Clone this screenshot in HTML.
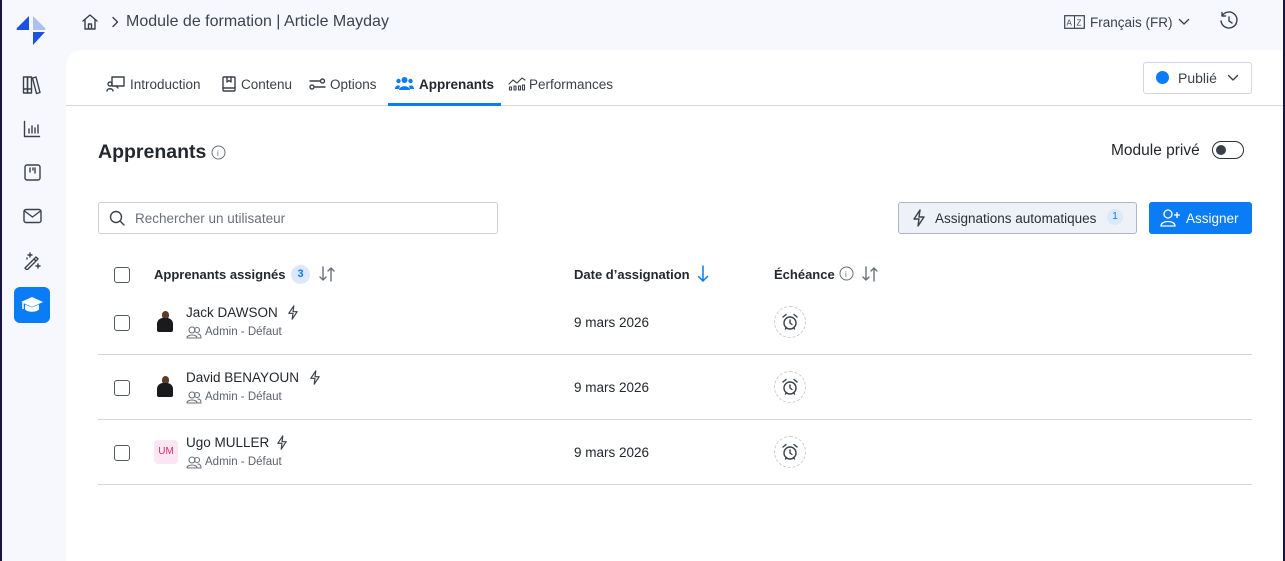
<!DOCTYPE html>
<html><head><meta charset="utf-8"><style>
*{box-sizing:border-box;margin:0;padding:0}
body{width:1285px;height:561px;overflow:hidden;background:#f7f8fd;font-family:"Liberation Sans",sans-serif;color:#2b2f36;position:relative}
.a{position:absolute}
svg{display:block}
.ic{stroke:#3b4049;fill:none;stroke-width:1.4;stroke-linecap:round;stroke-linejoin:round}
.t{font-size:13.5px;color:#3b4049;white-space:nowrap}
.h{font-size:13px;font-weight:bold;color:#23272e;white-space:nowrap}
.cb{width:16px;height:16px;border:1.5px solid #555b64;border-radius:3px;background:#fff}
.hr{height:1px;background:#d3d6dc;left:98px;width:1154px}
</style></head><body>
<div class="a" style="left:0;top:0;width:2px;height:561px;background:#1a1347"></div>
<div class="a" style="right:0;top:0;width:2px;height:561px;background:#1a1347"></div>
<!-- logo -->
<svg class="a" style="left:15px;top:14px" width="32" height="32" viewBox="0 0 32 32">
<path d="M14 2 L14 16 L2 16 Q1 15 2 14 Z" fill="#1d52e0"/><path d="M18 2 L30 14 Q31 15 30 16 L18 16 Z" fill="#a9c1f5"/><path d="M18 18 L30 18 L18 31 Z" fill="#1d52e0"/></svg>
<!-- sidebar icons -->
<svg class="a ic" style="left:22px;top:75px" width="20" height="20" viewBox="0 0 20 20"><rect x="1.5" y="2" width="4" height="16"/><rect x="5.5" y="2" width="4" height="16"/><path d="M10.5 3 l3.5-1 4 15.5-3.5 1z"/><path d="M1.5 14h8"/></svg>
<svg class="a ic" style="left:23px;top:120px" width="18" height="18" viewBox="0 0 18 18"><path d="M1.5 1.5v15h15M6 13V9M9 13V6M12 13V8M15 13V5"/></svg>
<svg class="a ic" style="left:24px;top:164px" width="17" height="17" viewBox="0 0 17 17"><rect x="1" y="1" width="15" height="15" rx="2"/><path d="M6 4v4M9 4v2M11 4v5"/></svg>
<svg class="a ic" style="left:23px;top:208px" width="19" height="16" viewBox="0 0 19 16"><rect x="1" y="1.5" width="17" height="13" rx="2"/><path d="M1.5 3l8 6 8-6"/></svg>
<svg class="a ic" style="left:23px;top:251px" width="19" height="19" viewBox="0 0 19 19"><path d="M2 17L13 6l2 2L4 19zM11 8l2 2M7 2v4M5 4h4M15 13v4M13 15h4M4 7v1"/></svg>
<div class="a" style="left:14px;top:287px;width:36px;height:36px;border-radius:6px;background:#0a7cf5"></div>
<svg class="a" style="left:20px;top:295px" width="24" height="20" viewBox="0 0 24 20"><path d="M12 2L1 7l11 5 11-5z" fill="#fff"/><path d="M5 9.5v5c3 3 11 3 14 0v-5l-7 3z" fill="#fff"/><path d="M3 8v6" stroke="#fff" stroke-width="1.5"/></svg>
<!-- breadcrumb -->
<svg class="a ic" style="left:81px;top:13px" width="18" height="18" viewBox="0 0 18 18"><path d="M2 8L9 2l7 6M4 6.5V16h10V6.5M7.5 16v-5h3v5"/></svg>
<svg class="a ic" style="left:110px;top:16px" width="10" height="12" viewBox="0 0 10 12"><path d="M3 1.5l4.5 4.5L3 10.5"/></svg>
<div class="a" style="left:126px;top:13px;font-size:16px;color:#3d4350">Module de formation | Article Mayday</div>
<!-- lang -->
<svg class="a" style="left:1064px;top:15px" width="21" height="14" viewBox="0 0 21 14"><rect x=".7" y=".7" width="19.6" height="12.6" fill="none" stroke="#3b4049" stroke-width="1.2"/><path d="M10.5 1v12" stroke="#3b4049"/><text x="2.5" y="10.5" font-size="8" font-family="Liberation Sans" fill="#3b4049">A</text><text x="12.5" y="10.5" font-size="8" font-family="Liberation Sans" fill="#3b4049">Z</text></svg>
<div class="a t" style="left:1090px;top:15px;font-size:13.5px">Français (FR)</div>
<svg class="a ic" style="left:1178px;top:18px" width="12" height="8" viewBox="0 0 12 8"><path d="M1.5 1.5l4.5 4.5 4.5-4.5"/></svg>
<svg class="a ic" style="left:1219px;top:11px" width="20" height="20" viewBox="0 0 20 20"><path d="M3 5a8 8 0 1 1-1 5M3 1.5V5h3.5M10 6v4l3 2"/></svg>
<!-- panel -->
<div class="a" style="left:66px;top:50px;width:1217px;height:511px;background:#fff;border-top-left-radius:16px"></div>
<!-- tabs -->
<div class="a" style="left:66px;top:105px;width:1217px;height:1px;background:#d7dae0"></div>
<div class="a" style="left:388px;top:103px;width:113px;height:3px;background:#0a7cf5"></div>
<svg class="a ic" style="left:106px;top:76px" width="19" height="16" viewBox="0 0 19 16"><rect x="6" y="1" width="12" height="9"/><circle cx="4" cy="8" r="2"/><path d="M1 15c0-3 6-3 6 0M10 10l2 2"/></svg>
<div class="a t" style="left:130px;top:77px">Introduction</div>
<svg class="a ic" style="left:222px;top:76px" width="14" height="16" viewBox="0 0 14 16"><rect x="1" y="1" width="12" height="14" rx="1"/><path d="M1 12h12M5 1v5l2-1.5L9 6V1"/></svg>
<div class="a t" style="left:241px;top:77px">Contenu</div>
<svg class="a ic" style="left:309px;top:78px" width="17" height="12" viewBox="0 0 17 12"><path d="M1 3h10M6 9h10"/><circle cx="13.5" cy="3" r="2"/><circle cx="3" cy="9" r="2"/></svg>
<div class="a t" style="left:330px;top:77px">Options</div>
<svg class="a" style="left:395px;top:76px" width="19" height="15" viewBox="0 0 19 15" fill="#0a7cf5"><circle cx="9.5" cy="4" r="3"/><circle cx="3.5" cy="5" r="2.2"/><circle cx="15.5" cy="5" r="2.2"/><path d="M4 14c0-5 11-5 11 0z"/><path d="M0 13c0-4 4-4 5-3l-1 3zM19 13c0-4-4-4-5-3l1 3z"/></svg>
<div class="a t" style="left:419px;top:77px;font-weight:bold;color:#23272e">Apprenants</div>
<svg class="a ic" style="left:508px;top:77px;stroke-width:1.1" width="18" height="14" viewBox="0 0 18 14"><path d="M1 7l4-4 4 3 5-5 3 2"/><rect x="1.5" y="10" width="2" height="3"/><rect x="6" y="9" width="2" height="4"/><rect x="10.5" y="9" width="2" height="4"/><rect x="14.5" y="8" width="2" height="5"/></svg>
<div class="a t" style="left:529px;top:77px">Performances</div>
<!-- publié -->
<div class="a" style="left:1143px;top:62px;width:109px;height:32px;border:1px solid #d3d6dc;border-radius:3px;background:#fff"></div>
<div class="a" style="left:1156px;top:71px;width:13px;height:13px;border-radius:50%;background:#0a7cf5"></div>
<div class="a t" style="left:1178px;top:70px;font-size:14px">Publié</div>
<svg class="a ic" style="left:1227px;top:74px" width="12" height="8" viewBox="0 0 12 8"><path d="M1.5 1.5l4.5 4.5 4.5-4.5"/></svg>
<!-- title -->
<div class="a" style="left:98px;top:141px;font-size:19.5px;font-weight:bold;color:#23272e">Apprenants</div>
<svg class="a" style="left:211px;top:145px" width="15" height="15" viewBox="0 0 15 15"><circle cx="7.5" cy="7.5" r="6.5" fill="none" stroke="#6b7079"/><text x="6" y="11" font-size="8" font-family="Liberation Sans" fill="#6b7079">i</text></svg>
<div class="a t" style="left:1111px;top:142px;font-size:15.5px;color:#23272e">Module privé</div>
<div class="a" style="left:1212px;top:141px;width:32px;height:18px;border:1.5px solid #2b2f36;border-radius:9px"></div>
<div class="a" style="left:1216px;top:145px;width:10px;height:10px;border-radius:50%;background:#3b414b"></div>
<!-- search -->
<div class="a" style="left:98px;top:202px;width:400px;height:32px;border:1px solid #ccd0d7;border-radius:3px"></div>
<svg class="a ic" style="left:109px;top:210px" width="16" height="16" viewBox="0 0 16 16"><circle cx="7" cy="7" r="5.5"/><path d="M11 11l4 4"/></svg>
<div class="a t" style="left:135px;top:211px;color:#6b7079">Rechercher un utilisateur</div>
<!-- buttons -->
<div class="a" style="left:898px;top:202px;width:239px;height:32px;border:1px solid #b0b6c2;border-radius:3px;background:#eef1f8"></div>
<svg class="a ic" style="left:912px;top:209px" width="14" height="18" viewBox="0 0 14 18"><path d="M8 1L2 10h5l-1 7 6-9H7z"/></svg>
<div class="a t" style="left:935px;top:211px;color:#2b2f36">Assignations automatiques</div>
<div class="a" style="left:1107px;top:209px;width:16px;height:16px;border-radius:50%;background:#dce8fb;color:#0a7cf5;font-size:10px;text-align:center;line-height:16px">1</div>
<div class="a" style="left:1149px;top:202px;width:103px;height:32px;border-radius:3px;background:#0a7cf5"></div>
<svg class="a" style="left:1160px;top:209px" width="22" height="18" viewBox="0 0 22 18" fill="none" stroke="#fff" stroke-width="1.3"><circle cx="8" cy="5" r="4"/><path d="M1 17c0-6 14-6 14 0zM17 3v6M14 6h6"/></svg>
<div class="a t" style="left:1186px;top:211px;color:#fff">Assigner</div>
<!-- header row -->
<div class="a cb" style="left:114px;top:267px"></div>
<div class="a h" style="left:154px;top:267px">Apprenants assignés</div>
<div class="a" style="left:291px;top:265px;width:19px;height:19px;border-radius:50%;background:#dce8fb;color:#0a7cf5;font-size:11px;font-weight:bold;text-align:center;line-height:19px">3</div>
<svg class="a ic" style="left:319px;top:266px;stroke:#6b7079" width="16" height="16" viewBox="0 0 16 16"><path d="M4 1v13M1 11l3 3 3-3M12 15V2M9 5l3-3 3 3"/></svg>
<div class="a h" style="left:574px;top:267px">Date d’assignation</div>
<svg class="a" style="left:697px;top:265px" width="12" height="18" viewBox="0 0 12 18" fill="none" stroke="#0a7cf5" stroke-width="1.5" stroke-linecap="round"><path d="M6 1v15M1.5 11.5L6 16l4.5-4.5"/></svg>
<div class="a h" style="left:774px;top:267px">Échéance</div>
<svg class="a" style="left:839px;top:266px" width="15" height="15" viewBox="0 0 15 15"><circle cx="7.5" cy="7.5" r="6.5" fill="none" stroke="#6b7079"/><text x="6" y="11" font-size="8" font-family="Liberation Sans" fill="#6b7079">i</text></svg>
<svg class="a ic" style="left:862px;top:266px" width="16" height="16" viewBox="0 0 16 16"><path d="M4 1v13M1 11l3 3 3-3M12 15V2M9 5l3-3 3 3" stroke="#6b7079"/></svg>
<!-- rows -->
<div class="a hr" style="top:354px"></div>
<div class="a hr" style="top:419px"></div>
<div class="a hr" style="top:484px"></div>
<!-- row1 -->
<div class="a cb" style="left:114px;top:315px"></div>
<div class="a" style="left:162px;top:311px;width:7px;height:8px;border-radius:50% 50% 40% 40%;background:#5a3c2c"></div>
<div class="a" style="left:157px;top:318px;width:16px;height:14px;border-radius:6px 6px 2px 2px;background:#1a1a1c"></div>
<div class="a t" style="left:186px;top:305px;color:#23272e">Jack DAWSON</div>
<svg class="a ic" style="left:287px;top:305px" width="12" height="15" viewBox="0 0 14 18"><path d="M8 1L2 10h5l-1 7 6-9H7z"/></svg>
<svg class="a ic" style="left:186px;top:326px;stroke:#6b7079;stroke-width:1.1" width="16" height="13" viewBox="0 0 16 13"><circle cx="6" cy="4" r="3"/><circle cx="11" cy="4" r="2.5"/><path d="M1 12c0-4 10-4 10 0zM12 8c2 0 3 1 3 4h-3"/></svg>
<div class="a t" style="left:205px;top:326px;font-size:11.5px;color:#5c626c">Admin - Défaut</div>
<div class="a t" style="left:574px;top:315px;color:#23272e">9 mars 2026</div>
<div class="a" style="left:774px;top:306px;width:32px;height:32px;border-radius:50%;border:1px dashed #c9ccd2"></div>
<svg class="a ic" style="left:781px;top:313px" width="18" height="18" viewBox="0 0 18 18"><circle cx="9" cy="10" r="6"/><path d="M9 7v3l2 1.5M2 4l3-2.5M16 4l-3-2.5M4.5 16l1-1.5M13.5 16l-1-1.5"/></svg>
<!-- row2 -->
<div class="a cb" style="left:114px;top:380px"></div>
<div class="a" style="left:162px;top:376px;width:7px;height:8px;border-radius:50% 50% 40% 40%;background:#5a3c2c"></div>
<div class="a" style="left:157px;top:383px;width:16px;height:14px;border-radius:6px 6px 2px 2px;background:#1a1a1c"></div>
<div class="a t" style="left:186px;top:370px;color:#23272e">David BENAYOUN</div>
<svg class="a ic" style="left:309px;top:370px" width="12" height="15" viewBox="0 0 14 18"><path d="M8 1L2 10h5l-1 7 6-9H7z"/></svg>
<svg class="a ic" style="left:186px;top:391px;stroke:#6b7079;stroke-width:1.1" width="16" height="13" viewBox="0 0 16 13"><circle cx="6" cy="4" r="3"/><circle cx="11" cy="4" r="2.5"/><path d="M1 12c0-4 10-4 10 0zM12 8c2 0 3 1 3 4h-3"/></svg>
<div class="a t" style="left:205px;top:391px;font-size:11.5px;color:#5c626c">Admin - Défaut</div>
<div class="a t" style="left:574px;top:380px;color:#23272e">9 mars 2026</div>
<div class="a" style="left:774px;top:371px;width:32px;height:32px;border-radius:50%;border:1px dashed #c9ccd2"></div>
<svg class="a ic" style="left:781px;top:378px" width="18" height="18" viewBox="0 0 18 18"><circle cx="9" cy="10" r="6"/><path d="M9 7v3l2 1.5M2 4l3-2.5M16 4l-3-2.5M4.5 16l1-1.5M13.5 16l-1-1.5"/></svg>
<!-- row3 -->
<div class="a cb" style="left:114px;top:445px"></div>
<div class="a" style="left:154px;top:440px;width:24px;height:24px;border-radius:4px;background:#fce6f1;color:#d6336c;font-size:10px;text-align:center;line-height:24px">UM</div>
<div class="a t" style="left:186px;top:435px;color:#23272e">Ugo MULLER</div>
<svg class="a ic" style="left:276px;top:435px" width="12" height="15" viewBox="0 0 14 18"><path d="M8 1L2 10h5l-1 7 6-9H7z"/></svg>
<svg class="a ic" style="left:186px;top:456px;stroke:#6b7079;stroke-width:1.1" width="16" height="13" viewBox="0 0 16 13"><circle cx="6" cy="4" r="3"/><circle cx="11" cy="4" r="2.5"/><path d="M1 12c0-4 10-4 10 0zM12 8c2 0 3 1 3 4h-3"/></svg>
<div class="a t" style="left:205px;top:456px;font-size:11.5px;color:#5c626c">Admin - Défaut</div>
<div class="a t" style="left:574px;top:445px;color:#23272e">9 mars 2026</div>
<div class="a" style="left:774px;top:436px;width:32px;height:32px;border-radius:50%;border:1px dashed #c9ccd2"></div>
<svg class="a ic" style="left:781px;top:443px" width="18" height="18" viewBox="0 0 18 18"><circle cx="9" cy="10" r="6"/><path d="M9 7v3l2 1.5M2 4l3-2.5M16 4l-3-2.5M4.5 16l1-1.5M13.5 16l-1-1.5"/></svg>
</body></html>
